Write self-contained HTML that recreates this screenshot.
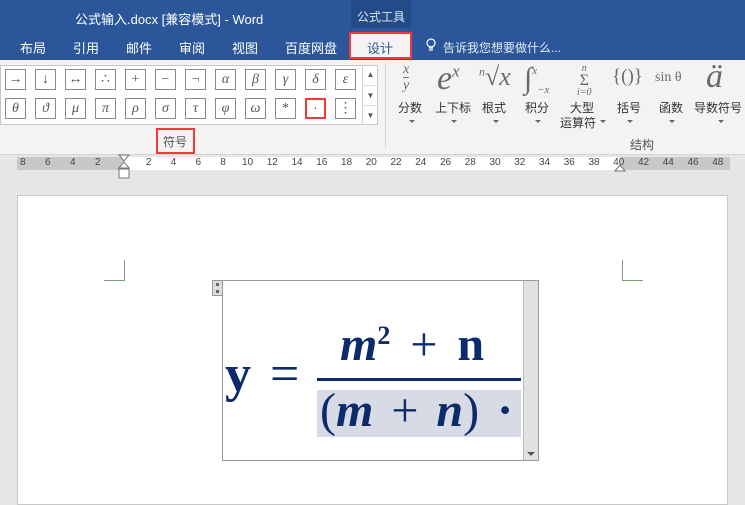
<!DOCTYPE html>
<html><head><meta charset="utf-8"><style>
*{margin:0;padding:0;box-sizing:border-box}
body{width:745px;height:502px;overflow:hidden;background:#e6e6e6;font-family:"Liberation Sans","Noto Sans CJK SC",sans-serif;position:relative}
.a{position:absolute}
.title{left:0;top:0;width:745px;height:60px;background:#2b579a}
.t{color:#fff;font-size:13px;white-space:nowrap}
.ribbon{left:0;top:60px;width:745px;height:95px;background:#f3f3f3;border-bottom:1px solid #d5d5d5}
.sb{width:21px;height:21px;border:1px solid #8a8a8a;background:#fff;font-family:"Liberation Serif","DejaVu Serif",serif;font-style:italic;font-size:14px;color:#555;text-align:center;line-height:19px}
.n{font-style:normal}
.lbl{font-size:12px;color:#333;white-space:nowrap}
.ic{font-family:"Liberation Serif","DejaVu Serif",serif;color:#6a6a6a;white-space:nowrap}
.arr{width:0;height:0;border-left:3px solid transparent;border-right:3px solid transparent;border-top:3px solid #666}
.rn{font-size:10px;color:#444;top:157px}
.eq{font-family:"Liberation Serif","DejaVu Serif",serif;font-weight:bold;color:#0d2a6a;white-space:nowrap}
.p{font-weight:normal}
</style></head><body>
<div class="a title"></div>
<div class="a" style="left:351px;top:0;width:60px;height:28px;background:#234b88"></div>
<div class="a t" style="left:75px;top:9px;font-size:13px">公式输入.docx [兼容模式] - Word</div>
<div class="a t" style="left:357px;top:8px;font-size:12px;color:#dfe6f1">公式工具</div>
<div class="a t" style="left:20px;top:38px">布局</div>
<div class="a t" style="left:73px;top:38px">引用</div>
<div class="a t" style="left:126px;top:38px">邮件</div>
<div class="a t" style="left:179px;top:38px">审阅</div>
<div class="a t" style="left:232px;top:38px">视图</div>
<div class="a t" style="left:285px;top:38px">百度网盘</div>
<div class="a" style="left:349px;top:32px;width:63px;height:27px;background:#f3f3f3;border:2px solid #f03a3a"></div>
<div class="a t" style="left:367px;top:38px;color:#2b579a">设计</div>
<svg class="a" style="left:426px;top:38px" width="10" height="15"><circle cx="5" cy="5" r="4" fill="none" stroke="#fff" stroke-width="1.2"/><path d="M3 10h4M3 12h4" stroke="#fff" stroke-width="1.2"/></svg>
<div class="a t" style="left:443px;top:39px;font-size:12px;color:#e3e9f3">告诉我您想要做什么...</div>

<div class="a ribbon"></div>
<div class="a" style="left:0;top:65px;width:378px;height:60px;background:#fff;border:1px solid #c6c6c6"></div>
<div id="sym"></div>
<div class="a" style="left:362px;top:65px;width:16px;height:60px;border-left:1px solid #d0d0d0;font-size:8px;color:#555;text-align:center">
<div style="height:20px;line-height:20px">▲</div><div style="height:20px;line-height:20px;border-top:1px solid #ddd">▼</div><div style="height:20px;line-height:20px;border-top:1px solid #ddd">▼</div></div>
<div class="a" style="left:156px;top:128px;width:39px;height:26px;border:2px solid #f03a3a"></div>
<div class="a lbl" style="left:163px;top:133px;color:#555">符号</div>
<div class="a" style="left:385px;top:63px;width:1px;height:85px;background:#d5d5d5"></div>

<div class="a ic" style="left:403px;top:63px;font-size:14px;font-style:italic;text-align:center;line-height:14px">x<br><span style="display:block;border-top:1px solid #777;line-height:16px">y</span></div>
<div class="a ic" style="left:437px;top:60px;font-size:34px;font-style:italic">e<sup style="font-size:17px">x</sup></div>
<div class="a ic" style="left:479px;top:62px;font-size:26px"><sup style="font-size:12px;font-style:italic">n</sup>√<i>x</i></div>
<div class="a ic" style="left:524px;top:62px;font-size:30px">∫<span style="font-size:11px;font-style:italic;position:relative;top:-14px">x</span></div>
<div class="a ic" style="left:537px;top:84px;font-size:11px;font-style:italic">−x</div>
<div class="a ic" style="left:577px;top:64px;font-size:10px;font-style:italic;text-align:center;line-height:10px">n<br><span style="font-size:16px;font-style:normal;line-height:14px">Σ</span><br>i=0</div>
<div class="a ic" style="left:612px;top:66px;font-size:19px">{()}</div>
<div class="a ic" style="left:655px;top:70px;font-size:14px">sin θ</div>
<div class="a ic" style="left:706px;top:58px;font-size:34px;font-style:italic">ä</div>
<div class="a lbl" style="left:398px;top:99px">分数</div>
<div class="a lbl" style="left:435px;top:99px">上下标</div>
<div class="a lbl" style="left:482px;top:99px">根式</div>
<div class="a lbl" style="left:525px;top:99px">积分</div>
<div class="a lbl" style="left:570px;top:99px">大型</div>
<div class="a lbl" style="left:560px;top:114px">运算符</div>
<div class="a arr" style="left:600px;top:120px"></div>
<div class="a lbl" style="left:617px;top:99px">括号</div>
<div class="a lbl" style="left:659px;top:99px">函数</div>
<div class="a lbl" style="left:694px;top:99px">导数符号</div>
<div class="a arr" style="left:409px;top:120px"></div>
<div class="a arr" style="left:451px;top:120px"></div>
<div class="a arr" style="left:493px;top:120px"></div>
<div class="a arr" style="left:535px;top:120px"></div>
<div class="a arr" style="left:627px;top:120px"></div>
<div class="a arr" style="left:669px;top:120px"></div>
<div class="a arr" style="left:718px;top:120px"></div>
<div class="a lbl" style="left:630px;top:136px;color:#555">结构</div>

<div class="a" style="left:17px;top:157px;width:713px;height:13px;background:#c8c8c8"></div>
<div class="a" style="left:123px;top:157px;width:497px;height:13px;background:#fff"></div>
<div id="ruler"></div>
<svg class="a" style="left:118px;top:154px" width="12" height="26"><path d="M1 1h10L6 7z M6 8L1 14h10z" fill="#fff" stroke="#777"/><rect x="1" y="15" width="10" height="9" fill="#fff" stroke="#777"/></svg>
<svg class="a" style="left:614px;top:164px" width="12" height="9"><path d="M6 1L1 7h10z" fill="#fff" stroke="#777"/></svg>

<div class="a" style="left:17px;top:195px;width:711px;height:310px;background:#fff;border:1px solid #c8c8c8"></div>
<div class="a" style="left:124px;top:260px;width:1px;height:21px;background:#7b9a7b"></div>
<div class="a" style="left:104px;top:280px;width:21px;height:1px;background:#7b9a7b"></div>
<div class="a" style="left:622px;top:260px;width:1px;height:21px;background:#7b9a7b"></div>
<div class="a" style="left:622px;top:280px;width:21px;height:1px;background:#7b9a7b"></div>

<div class="a" style="left:212px;top:280px;width:11px;height:16px;background:#ddd;border:1px solid #999"></div>
<div class="a" style="left:216px;top:283px;width:3px;height:10px;border-left:3px dotted #666"></div>
<div class="a" style="left:222px;top:280px;width:317px;height:181px;border:1px solid #999;background:#fff"></div>
<div class="a" style="left:523px;top:281px;width:15px;height:179px;background:#e2e2e2;border-left:1px solid #bbb"></div>
<div class="a" style="left:527px;top:452px;width:0;height:0;border-left:4px solid transparent;border-right:4px solid transparent;border-top:4px solid #555"></div>
<div class="a" style="left:317px;top:390px;width:204px;height:47px;background:#d6dbe6"></div>
<div class="a" style="left:317px;top:378px;width:204px;height:3px;background:#0d2a6a"></div>
<div class="a eq" style="left:225px;top:343px;font-size:52px;line-height:64px">y <span class="p" style="margin-left:6px">=</span></div>
<div class="a eq" style="left:340px;top:306px;font-size:48px;line-height:60px;word-spacing:8px"><i>m</i><sup style="font-size:26px;vertical-align:16px">2</sup> <span class="p">+</span> n</div>
<div class="a eq" style="left:320px;top:382px;font-size:48px;line-height:58px;word-spacing:6px"><span class="p">(</span><i>m</i> <span class="p">+</span> <i>n</i><span class="p">)</span> ·</div>

<script>
var s1=["→","↓","↔","∴","+","−","¬","α","β","γ","δ","ε"],s2=["θ","ϑ","μ","π","ρ","σ","τ","φ","ω","*","·","⋮"],h="";
for(var i=0;i<12;i++){var n1=i<7?" n":"",n2=i>=9?" n":"";
h+='<div class="a sb'+n1+'" style="left:'+(5+30*i)+'px;top:69px">'+s1[i]+'</div>';
h+='<div class="a sb'+n2+'" style="left:'+(5+30*i)+'px;top:98px;'+(i==10?'border:2px solid #f03a3a;':'')+'">'+s2[i]+'</div>';}
document.getElementById('sym').innerHTML=h;
var r="",v=[8,6,4,2];for(var j=0;j<4;j++)r+='<div class="a rn" style="left:'+(20+25*j)+'px">'+v[j]+'</div>';
for(var k=2;k<=48;k+=2)r+='<div class="a rn" style="left:'+(146+24.75*(k/2-1)-(k>=10?3:0))+'px">'+k+'</div>';
document.getElementById('ruler').innerHTML=r;
</script>
</body></html>
